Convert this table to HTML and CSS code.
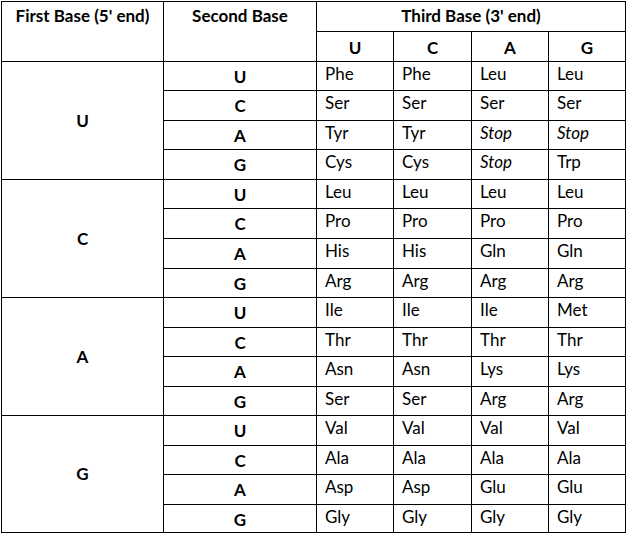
FILE: index.html
```html
<!DOCTYPE html>
<html>
<head>
<meta charset="utf-8">
<link rel="stylesheet" href="styles.css">
</head>
<body>
<div class="wrap">
<div class="codon">
  <div class="h first">First Base (5' end)</div>
  <div class="h second">Second Base</div>
  <div class="h third">Third Base (3' end)</div>
  <div class="h sub">U</div><div class="h sub">C</div><div class="h sub">A</div><div class="h sub">G</div>

  <div class="fb g1">U</div>
  <div class="sb">U</div><div class="d">Phe</div><div class="d">Phe</div><div class="d">Leu</div><div class="d">Leu</div>
  <div class="sb">C</div><div class="d">Ser</div><div class="d">Ser</div><div class="d">Ser</div><div class="d">Ser</div>
  <div class="sb">A</div><div class="d">Tyr</div><div class="d">Tyr</div><div class="d i">Stop</div><div class="d i">Stop</div>
  <div class="sb">G</div><div class="d">Cys</div><div class="d">Cys</div><div class="d i">Stop</div><div class="d">Trp</div>

  <div class="fb g2">C</div>
  <div class="sb">U</div><div class="d">Leu</div><div class="d">Leu</div><div class="d">Leu</div><div class="d">Leu</div>
  <div class="sb">C</div><div class="d">Pro</div><div class="d">Pro</div><div class="d">Pro</div><div class="d">Pro</div>
  <div class="sb">A</div><div class="d">His</div><div class="d">His</div><div class="d">Gln</div><div class="d">Gln</div>
  <div class="sb">G</div><div class="d">Arg</div><div class="d">Arg</div><div class="d">Arg</div><div class="d">Arg</div>

  <div class="fb g3">A</div>
  <div class="sb">U</div><div class="d">Ile</div><div class="d">Ile</div><div class="d">Ile</div><div class="d">Met</div>
  <div class="sb">C</div><div class="d">Thr</div><div class="d">Thr</div><div class="d">Thr</div><div class="d">Thr</div>
  <div class="sb">A</div><div class="d">Asn</div><div class="d">Asn</div><div class="d">Lys</div><div class="d">Lys</div>
  <div class="sb">G</div><div class="d">Ser</div><div class="d">Ser</div><div class="d">Arg</div><div class="d">Arg</div>

  <div class="fb g4">G</div>
  <div class="sb">U</div><div class="d">Val</div><div class="d">Val</div><div class="d">Val</div><div class="d">Val</div>
  <div class="sb">C</div><div class="d">Ala</div><div class="d">Ala</div><div class="d">Ala</div><div class="d">Ala</div>
  <div class="sb">A</div><div class="d">Asp</div><div class="d">Asp</div><div class="d">Glu</div><div class="d">Glu</div>
  <div class="sb">G</div><div class="d">Gly</div><div class="d">Gly</div><div class="d">Gly</div><div class="d">Gly</div>
</div>
</div>
</body>
</html>
```

FILE: styles.css
```css
html, body {
  margin: 0;
  padding: 0;
  background: #fff;
}
.wrap {
  padding: 1px 0 0 1px;
}
.codon {
  display: inline-grid;
  background: #000;
  padding: 1px;
  gap: 1px;
  grid-template-columns: 161px 152px 76px 77px 76px 76px;
  grid-template-rows: 29px 29px 28px 29px 28px 29px 28px 29px 29px 28px 29px 28px 29px 28px 29px 28px 29px 27px;
  font-family: Lato, "Open Sans", sans-serif;
  font-size: 17px;
  line-height: 20px;
  color: #000;
}
.codon > div {
  background: #fff;
}
.h {
  font-weight: bold;
  text-align: center;
}
.first {
  grid-row: 1 / span 2;
  grid-column: 1;
  padding-top: 4px;
}
.second {
  grid-row: 1 / span 2;
  grid-column: 2;
  padding-top: 4px;
}
.third {
  grid-row: 1;
  grid-column: 3 / span 4;
  padding-top: 4px;
}
.sub {
  padding-top: 6px;
}
.fb {
  grid-column: 1;
  font-weight: bold;
  display: flex;
  align-items: center;
  justify-content: center;
}
.g1 { grid-row: 3 / span 4; }
.g2 { grid-row: 7 / span 4; }
.g3 { grid-row: 11 / span 4; }
.g4 { grid-row: 15 / span 4; }
.sb {
  grid-column: 2;
  font-weight: bold;
  text-align: center;
  padding-top: 5px;
}
.d {
  padding: 2px 0 0 8px;
}
.i {
  font-style: italic;
}
```
